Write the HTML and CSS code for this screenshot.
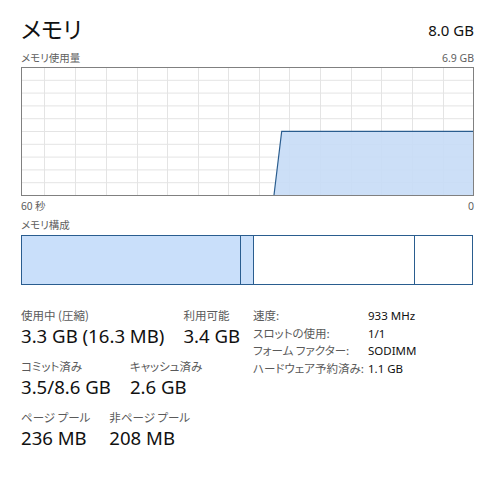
FILE: index.html
```html
<!DOCTYPE html>
<html lang="ja">
<head>
<meta charset="utf-8">
<link rel="stylesheet" href="styles.css">
</head>
<body>
<div class="page">
  <div class="header">
    <div class="title">メモリ</div>
    <div class="total">8.0 GB</div>
  </div>
  <div class="caption">
    <span>メモリ使用量</span>
    <span>6.9 GB</span>
  </div>
  <svg class="graph" width="453" height="129" viewBox="0 0 453 129">
    <g stroke="#e4e4e4" stroke-width="1">
      <line x1="23.5" y1="0" x2="23.5" y2="129"/>
      <line x1="54.5" y1="0" x2="54.5" y2="129"/>
      <line x1="85.5" y1="0" x2="85.5" y2="129"/>
      <line x1="116.5" y1="0" x2="116.5" y2="129"/>
      <line x1="146.5" y1="0" x2="146.5" y2="129"/>
      <line x1="177.5" y1="0" x2="177.5" y2="129"/>
      <line x1="207.5" y1="0" x2="207.5" y2="129"/>
      <line x1="238.5" y1="0" x2="238.5" y2="129"/>
      <line x1="268.5" y1="0" x2="268.5" y2="129"/>
      <line x1="299.5" y1="0" x2="299.5" y2="129"/>
      <line x1="330.5" y1="0" x2="330.5" y2="129"/>
      <line x1="360.5" y1="0" x2="360.5" y2="129"/>
      <line x1="391.5" y1="0" x2="391.5" y2="129"/>
      <line x1="422.5" y1="0" x2="422.5" y2="129"/>
      <line x1="0" y1="13.3" x2="453" y2="13.3"/>
      <line x1="0" y1="26.1" x2="453" y2="26.1"/>
      <line x1="0" y1="38.9" x2="453" y2="38.9"/>
      <line x1="0" y1="51.7" x2="453" y2="51.7"/>
      <line x1="0" y1="64.5" x2="453" y2="64.5"/>
      <line x1="0" y1="77.3" x2="453" y2="77.3"/>
      <line x1="0" y1="90.1" x2="453" y2="90.1"/>
      <line x1="0" y1="102.9" x2="453" y2="102.9"/>
      <line x1="0" y1="115.7" x2="453" y2="115.7"/>
    </g>
    <polygon points="253,128 260.7,64.3 452,64.3 452,128" fill="#c6dcf6" fill-opacity="0.9"/>
    <polyline points="253,128 260.7,64.3 452,64.3" fill="none" stroke="#2a5d8f" stroke-width="1.2"/>
    <rect x="0.5" y="0.5" width="452" height="128" fill="none" stroke="#808080" stroke-width="1"/>
  </svg>
  <div class="caption axis">
    <span>60 秒</span>
    <span>0</span>
  </div>
  <div class="caption comp-label">
    <span>メモリ構成</span>
  </div>
  <div class="composition">
    <div class="seg inuse" style="width:218px"></div>
    <div class="seg modified" style="width:13px"></div>
    <div class="seg standby" style="width:161px"></div>
    <div class="seg free"></div>
  </div>
  <div class="stats">
    <div class="left">
      <div class="row">
        <div class="item"><div class="label">使用中 (圧縮)</div><div class="value">3.3 GB (16.3 MB)</div></div>
        <div class="item"><div class="label">利用可能</div><div class="value">3.4 GB</div></div>
      </div>
      <div class="row">
        <div class="item"><div class="label">コミット済み</div><div class="value">3.5/8.6 GB</div></div>
        <div class="item"><div class="label">キャッシュ済み</div><div class="value">2.6 GB</div></div>
      </div>
      <div class="row">
        <div class="item"><div class="label">ページ プール</div><div class="value">236 MB</div></div>
        <div class="item"><div class="label">非ページ プール</div><div class="value">208 MB</div></div>
      </div>
    </div>
    <div class="right">
      <div class="k">速度:</div><div class="v">933 MHz</div>
      <div class="k">スロットの使用:</div><div class="v">1/1</div>
      <div class="k">フォーム ファクター:</div><div class="v">SODIMM</div>
      <div class="k">ハードウェア予約済み:</div><div class="v">1.1 GB</div>
    </div>
  </div>
</div>
</body>
</html>
```

FILE: styles.css
```css
html, body {
  margin: 0;
  padding: 0;
  background: #ffffff;
}
body {
  font-family: "Noto Sans", "Noto Sans CJK JP", sans-serif;
  color: #1a1a1a;
}
.page {
  width: 453px;
  padding: 11px 0 0 21px;
}
.header {
  display: flex;
  justify-content: space-between;
  align-items: flex-end;
  height: 33px;
}
.title {
  font-family: "Noto Sans CJK JP", sans-serif;
  font-feature-settings: "palt";
  font-size: 23px;
  line-height: 32px;
  font-weight: 400;
  color: #111;
}
.total {
  font-size: 15px;
  line-height: 20px;
  color: #111;
  padding-bottom: 4px;
}
.caption {
  display: flex;
  justify-content: space-between;
  font-size: 10.5px;
  line-height: 14px;
  color: #606060;
  font-family: "Noto Sans CJK JP", sans-serif;
  font-feature-settings: "palt";
  margin-top: 7px;
  height: 14px;
}
.caption span:last-child {
  font-family: "Noto Sans", "Noto Sans CJK JP", sans-serif;
}
.graph {
  display: block;
  margin-top: 2px;
}
.caption.axis {
  margin-top: 3px;
}
.caption.comp-label {
  margin-top: 5px;
}
.composition {
  display: flex;
  margin-top: 3px;
  height: 48px;
  border: 1.5px solid #2a5d8f;
  width: 450px;
}
.seg {
  height: 100%;
  box-sizing: border-box;
}
.seg + .seg {
  border-left: 1.5px solid #2a5d8f;
}
.inuse, .modified {
  background: #c9dffa;
}
.free {
  flex: 1;
}
.stats {
  display: flex;
  align-items: flex-start;
  margin-top: 22px;
}
.left {
  width: 232px;
}
.row {
  display: flex;
  gap: 19px;
  margin-bottom: 9px;
}
.label {
  font-family: "Noto Sans CJK JP", sans-serif;
  font-feature-settings: "palt";
  font-size: 11.5px;
  line-height: 16px;
  color: #5a5a5a;
}
.value {
  font-size: 18.6px;
  line-height: 26px;
  color: #111;
}
.right {
  display: grid;
  grid-template-columns: 115px auto;
  align-content: start;
  font-size: 11.5px;
  line-height: 17.6px;
  white-space: nowrap;
}
.k {
  font-family: "Noto Sans CJK JP", sans-serif;
  font-feature-settings: "palt";
  color: #5a5a5a;
}
.v {
  color: #111;
}
```
